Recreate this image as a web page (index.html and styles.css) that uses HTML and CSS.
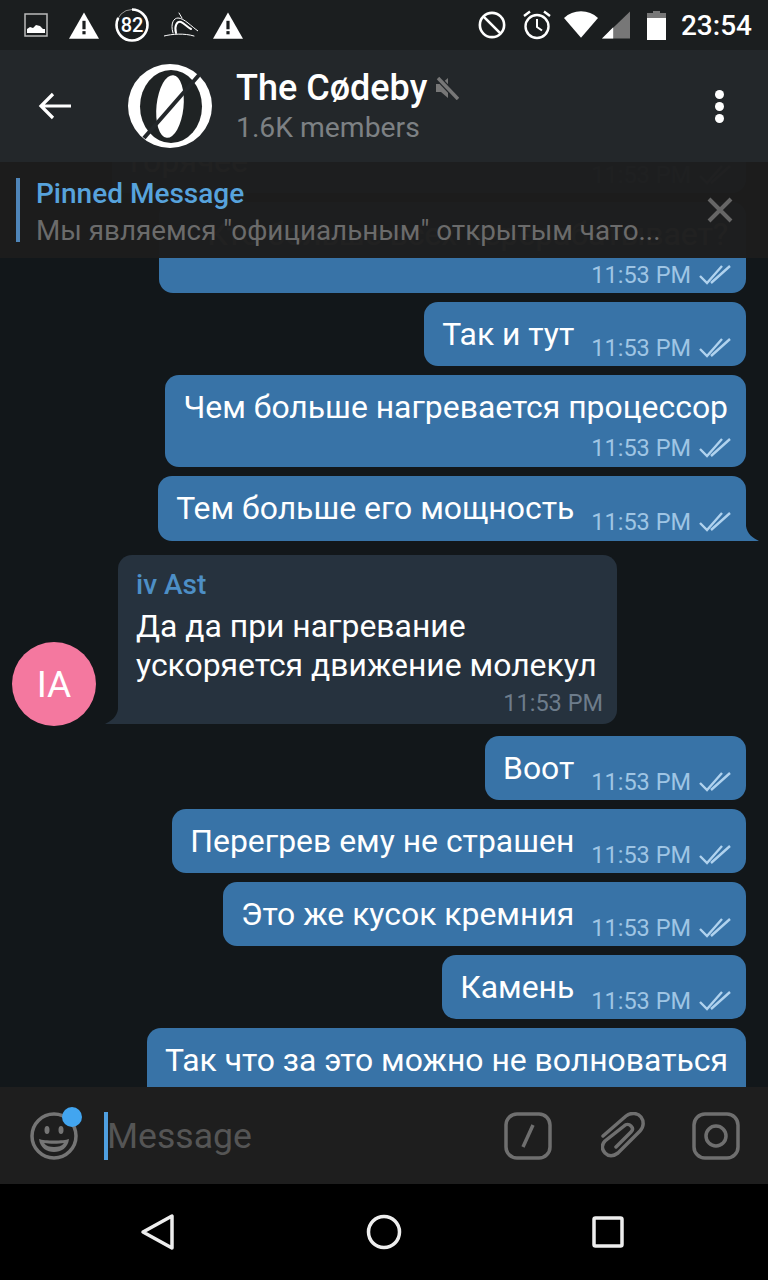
FILE: index.html
```html
<!DOCTYPE html>
<html lang="ru">
<head>
  <meta charset="UTF-8" />
  <title>The Cødeby</title>
  <link rel="stylesheet" href="styles.css">
</head>
<body>
  <div class="screen">

    <div class="statusbar">
      <div class="status-left">
        <svg class="ic-image" width="24" height="24" viewBox="0 0 24 24"><rect x="1" y="1" width="22" height="22" fill="none" stroke="#bbb" stroke-width="1.5"/><path d="M3 20v-4l3-2 3 1 3-3 4 1 3 3 2 0v4z" fill="#fff"/></svg>
        <svg class="ic-warn" width="30" height="27" viewBox="0 0 32 28"><path d="M16 0 32 28H0z" fill="#fff"/><rect x="14.3" y="9" width="3.4" height="9" fill="#1b1e1f"/><rect x="14.3" y="20" width="3.4" height="3.4" fill="#1b1e1f"/></svg>
        <div class="score">
          <svg width="34" height="34" viewBox="0 0 34 34"><circle cx="17" cy="17" r="15.500" fill="none" stroke="#999" stroke-width="1"/><circle cx="17" cy="17" r="15.500" fill="none" stroke="#fff" stroke-width="2.600" stroke-dasharray="80 98" transform="rotate(-90 17 17)"/></svg>
          <span>82</span>
        </div>
        <svg class="ic-dragon" width="34" height="28" viewBox="0 0 34 28"><g fill="none" stroke="#fff" stroke-linecap="round"><path d="M0 25c8-2 20-3 30 0" stroke-width="1"/><path d="M9 22C6 12 10 7 14 7c6 0 14 9 20 13" stroke-width="1"/><path d="M12 22c-2-7 1-12 5-11 3 1 6 5 10 7" stroke-width="2"/><path d="M15 2l3 5" stroke-width="1"/></g></svg>
        <svg class="ic-warn2" width="30" height="27" viewBox="0 0 32 28"><path d="M16 0 32 28H0z" fill="#fff"/><rect x="14.3" y="9" width="3.4" height="9" fill="#1b1e1f"/><rect x="14.3" y="20" width="3.4" height="3.4" fill="#1b1e1f"/></svg>
      </div>
      <div class="status-right">
        <svg width="28" height="28" viewBox="0 0 30 30"><circle cx="15" cy="15" r="13" fill="none" stroke="#fff" stroke-width="2.800"/><path d="M6 6l18 18" stroke="#fff" stroke-width="2.800"/></svg>
        <svg class="alarm" width="30" height="30" viewBox="0 0 30 30"><g fill="none" stroke="#fff"><circle cx="15" cy="16.500" r="11.500" stroke-width="2.400"/><path d="M15 9v8l5 3.500" stroke-width="2"/><path d="M2 6l6-4.500M28 6l-6-4.500" stroke-width="2.400"/></g></svg>
        <svg class="wifi" width="34" height="28" viewBox="0 0 36 29"><path d="M18 28 0 7C5 2.500 11 0 18 0s13 2.500 18 7z" fill="#fff"/></svg>
        <svg class="signal" width="28" height="28" viewBox="0 0 30 29"><path d="M30 0v29H0z" fill="#777"/><path d="M0 29 12 17v12z" fill="#fff"/></svg>
        <svg class="battery" width="19" height="29" viewBox="0 0 19 29"><path d="M6 0h7v2h6v5H0V2h6z" fill="#777"/><path d="M0 7h19v22H0z" fill="#fff"/></svg>
        <span class="clock">23:54</span>
      </div>
    </div>

    <header class="topbar">
      <svg class="back" width="34" height="30" viewBox="0 0 34 30"><path d="M33 15H3M15 3 3 15l12 12" fill="none" stroke="#fff" stroke-width="3.200"/></svg>
      <svg class="logo" width="84" height="84" viewBox="0 0 84 84">
        <circle cx="42" cy="42" r="42" fill="#fff"/>
        <ellipse cx="43" cy="42.500" rx="31" ry="36.500" fill="#1f2324"/>
        <ellipse cx="42" cy="42.500" rx="13.500" ry="31.500" fill="#fff" transform="rotate(6 42 42.500)"/>
        <path d="M16 74 71 11" stroke="#23272a" stroke-width="4"/>
      </svg>
      <div class="chat-title">
        <div class="title-line">
          <span class="name">The Cødeby</span>
          <svg width="24" height="24" viewBox="0 0 24 24"><path d="M1 8h5l7-6v20l-7-6H1z" fill="#777"/><path d="M3 2l20 21" stroke="#23272a" stroke-width="6"/><path d="M3 2l20 21" stroke="#777" stroke-width="3.500"/></svg>
        </div>
        <div class="members">1.6K members</div>
      </div>
      <div class="dots"><i></i><i></i><i></i></div>
    </header>

    <div class="chat">
      <div class="pinned">
        <div class="pin-line"></div>
        <div class="pin-body">
          <div class="pin-title">Pinned Message</div>
          <div class="pin-text">Мы являемся "официальным" открытым чато...</div>
        </div>
        <svg class="pin-close" width="26" height="26" viewBox="0 0 26 26"><path d="M2 2l22 22M24 2 2 24" stroke="#666" stroke-width="4"/></svg>
      </div>

      <div class="msg out behind-top">
        <span class="text">горячее</span>
        <span class="meta"><span class="time">11:53 PM</span><svg class="ticks" width="32" height="20" viewBox="0 0 32 20"><path d="M1 11l7 7L23 1M12 18 31 1" fill="none" stroke="#b0d2ee" stroke-width="2.400"/></svg></span>
      </div>

      <div class="msg out stacked behind-next">
        <div class="text">Кто больше всех перерабатывает?</div>
        <span class="meta"><span class="time">11:53 PM</span><svg class="ticks" width="32" height="20" viewBox="0 0 32 20"><path d="M1 11l7 7L23 1M12 18 31 1" fill="none" stroke="#b0d2ee" stroke-width="2.400"/></svg></span>
      </div>

      <div class="msg out">
        <span class="text">Так и тут</span>
        <span class="meta"><span class="time">11:53 PM</span><svg class="ticks" width="32" height="20" viewBox="0 0 32 20"><path d="M1 11l7 7L23 1M12 18 31 1" fill="none" stroke="#b0d2ee" stroke-width="2.400"/></svg></span>
      </div>

      <div class="msg out stacked">
        <span class="text">Чем больше нагревается процессор</span>
        <span class="meta"><span class="time">11:53 PM</span><svg class="ticks" width="32" height="20" viewBox="0 0 32 20"><path d="M1 11l7 7L23 1M12 18 31 1" fill="none" stroke="#b0d2ee" stroke-width="2.400"/></svg></span>
      </div>

      <div class="msg out tail">
        <span class="text">Тем больше его мощность</span>
        <span class="meta"><span class="time">11:53 PM</span><svg class="ticks" width="32" height="20" viewBox="0 0 32 20"><path d="M1 11l7 7L23 1M12 18 31 1" fill="none" stroke="#b0d2ee" stroke-width="2.400"/></svg></span>
      </div>

      <div class="in-row">
        <div class="avatar">IA</div>
        <div class="msg in">
          <div class="sender">iv Ast</div>
          <div class="text">Да да при нагревание<br>ускоряется движение молекул</div>
          <div class="in-time">11:53 PM</div>
        </div>
      </div>

      <div class="msg out">
        <span class="text">Воот</span>
        <span class="meta"><span class="time">11:53 PM</span><svg class="ticks" width="32" height="20" viewBox="0 0 32 20"><path d="M1 11l7 7L23 1M12 18 31 1" fill="none" stroke="#b0d2ee" stroke-width="2.400"/></svg></span>
      </div>

      <div class="msg out">
        <span class="text">Перегрев ему не страшен</span>
        <span class="meta"><span class="time">11:53 PM</span><svg class="ticks" width="32" height="20" viewBox="0 0 32 20"><path d="M1 11l7 7L23 1M12 18 31 1" fill="none" stroke="#b0d2ee" stroke-width="2.400"/></svg></span>
      </div>

      <div class="msg out">
        <span class="text">Это же кусок кремния</span>
        <span class="meta"><span class="time">11:53 PM</span><svg class="ticks" width="32" height="20" viewBox="0 0 32 20"><path d="M1 11l7 7L23 1M12 18 31 1" fill="none" stroke="#b0d2ee" stroke-width="2.400"/></svg></span>
      </div>

      <div class="msg out">
        <span class="text">Камень</span>
        <span class="meta"><span class="time">11:53 PM</span><svg class="ticks" width="32" height="20" viewBox="0 0 32 20"><path d="M1 11l7 7L23 1M12 18 31 1" fill="none" stroke="#b0d2ee" stroke-width="2.400"/></svg></span>
      </div>

      <div class="msg out stacked">
        <span class="text">Так что за это можно не волноваться</span>
      </div>
    </div>

    <div class="composer">
      <div class="emoji">
        <svg width="48" height="48" viewBox="0 0 48 48"><circle cx="24" cy="24" r="22" fill="none" stroke="#757575" stroke-width="3.500"/><ellipse cx="17" cy="18" rx="2.500" ry="4" fill="#757575"/><ellipse cx="31" cy="18" rx="2.500" ry="4" fill="#757575"/><path d="M9 27c5 2 25 2 30 0-1 9-8 13-15 13S10 36 9 27z" fill="#757575"/><path d="M14 31c5 1 15 1 20 0-2 3-6 4-10 4s-8-1-10-4z" fill="#1e1e1e"/></svg>
        <span class="emoji-dot"></span>
      </div>
      <div class="input">
        <span class="caret"></span>
        <span class="placeholder">Message</span>
      </div>
      <svg class="tool-bot" width="48" height="48" viewBox="0 0 48 48"><rect x="2" y="2" width="44" height="44" rx="11" fill="none" stroke="#6f6f6f" stroke-width="3.500"/><path d="M29 13 19 35" stroke="#6f6f6f" stroke-width="3.500"/></svg>
      <svg class="tool-clip" width="44" height="48" viewBox="0 0 44 48"><path d="M2 24 25 4c5-4 12-3 15 1s3 10-1 14L17 41c-4 3-9 4-13 0s-3-9 0-12L23 14c2-2 5-2 7 0s2 4 0 6L15 35" fill="none" stroke="#6f6f6f" stroke-width="3.500" stroke-linecap="round"/></svg>
      <svg class="tool-camera" width="48" height="48" viewBox="0 0 48 48"><rect x="2" y="2" width="44" height="44" rx="11" fill="none" stroke="#6f6f6f" stroke-width="3.500"/><circle cx="24" cy="24" r="10" fill="none" stroke="#6f6f6f" stroke-width="3.500"/></svg>
    </div>

    <nav class="navbar">
      <svg width="36" height="38" viewBox="0 0 36 38"><path d="M32 3v32L3 19z" fill="none" stroke="#eee" stroke-width="3.500" stroke-linejoin="round"/></svg>
      <svg width="36" height="36" viewBox="0 0 36 36"><circle cx="18" cy="18" r="15.500" fill="none" stroke="#eee" stroke-width="3.500"/></svg>
      <svg width="32" height="32" viewBox="0 0 32 32"><rect x="2" y="2" width="28" height="28" rx="1.500" fill="none" stroke="#eee" stroke-width="3.500"/></svg>
    </nav>

  </div>
</body>
</html>
```

FILE: styles.css
```css
* {
  box-sizing: border-box;
}
html, body {
  margin: 0;
  background: #000;
}
body {
  font-family: Roboto, 'Noto Sans', sans-serif;
  color: #fff;
}
svg {
  display: block;
  flex: none;
}
.screen {
  width: 768px;
  height: 1280px;
  display: flex;
  flex-direction: column;
  overflow: hidden;
}

/* status bar */
.statusbar {
  height: 50px;
  flex: none;
  background: #1b1e1f;
  display: flex;
  justify-content: space-between;
  align-items: center;
  padding: 0 16px 0 24px;
}
.status-left, .status-right {
  display: flex;
  align-items: center;
}
.ic-warn {
  margin-left: 21px;
}
.score {
  position: relative;
  width: 34px;
  height: 34px;
  margin-left: 16px;
}
.score span {
  position: absolute;
  top: 0;
  left: 0;
  width: 34px;
  text-align: center;
  font-size: 20px;
  font-weight: 500;
  line-height: 34px;
}
.ic-dragon {
  margin-left: 15px;
}
.ic-warn2 {
  margin-left: 15px;
}
.alarm {
  margin-left: 16px;
}
.wifi {
  margin-left: 12px;
}
.signal {
  margin-left: 4px;
}
.battery {
  margin-left: 17px;
}
.clock {
  margin-left: 15px;
  font-size: 28px;
  font-weight: 500;
}

/* header */
.topbar {
  height: 112px;
  flex: none;
  background: #23272a;
  display: flex;
  align-items: center;
  padding-left: 38px;
  position: relative;
  z-index: 3;
}
.logo {
  margin-left: 56px;
}
.chat-title {
  margin-left: 24px;
  flex: 1;
  margin-top: 3px;
}
.title-line {
  display: flex;
  align-items: center;
  gap: 8px;
  margin-top: -1px;
}
.name {
  font-size: 36px;
  font-weight: 500;
  line-height: 42px;
}
.members {
  font-size: 28.3px;
  line-height: 38px;
  color: #7d8184;
}
.dots {
  display: flex;
  flex-direction: column;
  gap: 3px;
  margin-right: 44px;
}
.dots i {
  width: 9px;
  height: 9px;
  border-radius: 50%;
  background: #fff;
}

/* chat */
.chat {
  flex: 1;
  min-height: 0;
  background: #12171a;
  position: relative;
  overflow: hidden;
  display: flex;
  flex-direction: column;
  gap: 9px;
  padding-right: 22px;
}
.pinned {
  position: absolute;
  top: 0;
  left: 0;
  right: 0;
  height: 96px;
  background: rgba(29, 29, 29, 0.98);
  z-index: 2;
  display: flex;
  align-items: center;
  padding: 0 35px 0 16px;
}
.pin-line {
  width: 4px;
  height: 64px;
  background: #4f85b8;
}
.pin-body {
  flex: 1;
  margin-left: 16px;
  padding-top: 5px;
}
.pin-title {
  font-size: 28px;
  font-weight: 500;
  line-height: 36px;
  color: #57a3dc;
}
.pin-text {
  font-size: 27.8px;
  line-height: 37px;
  color: #6b6b6b;
  white-space: nowrap;
}
.msg {
  font-size: 31.9px;
  line-height: 39px;
  position: relative;
  flex: none;
}
.msg.out {
  align-self: flex-end;
  background: #3873a7;
  border-radius: 14px;
  height: 64px;
  padding: 13px 15px 0 18px;
  display: flex;
}
.msg.out .text {
  white-space: nowrap;
}
.meta {
  display: flex;
  align-items: center;
  margin-left: 17px;
  height: 30px;
  margin-top: 18px;
  color: #9fc5e4;
  font-size: 23.5px;
  line-height: 30px;
  gap: 8px;
}
.msg.out.stacked {
  display: block;
  height: 92px;
  padding-right: 18px;
}
.msg.out.stacked .meta {
  margin-top: 6px;
  margin-right: -3px;
  justify-content: flex-end;
}

/* the two messages scrolled under the pinned bar */
.msg.out.behind-top {
  width: 634px;
  margin-top: -33px;
}
.behind-top .text {
  flex: 1;
}
.msg.out.stacked.behind-next {
  width: 587px;
  height: 91px;
  text-align: right;
}

.msg.out.tail {
  height: 65px;
  border-bottom-right-radius: 0;
}
.msg.out.tail::after {
  content: "";
  position: absolute;
  right: -13px;
  bottom: 0;
  width: 13px;
  height: 15px;
  background: #3873a7;
  clip-path: path("M0 0C1 8 7 12 13 15H0Z");
}
.in-row {
  display: flex;
  align-items: flex-end;
  margin-top: 5px;
  margin-bottom: 3px;
  padding-left: 12px;
  flex: none;
}
.avatar {
  width: 84px;
  height: 84px;
  border-radius: 50%;
  background: #f4789f;
  font-size: 37px;
  display: flex;
  align-items: center;
  justify-content: center;
  margin-bottom: -2px;
  flex: none;
}
.msg.in {
  margin-left: 22px;
  width: 499px;
  height: 169px;
  background: #26323e;
  border-radius: 14px;
  border-bottom-left-radius: 0;
  padding: 11px 18px 0;
}
.msg.in::after {
  content: "";
  position: absolute;
  left: -13px;
  bottom: 0;
  width: 13px;
  height: 15px;
  background: #26323e;
  clip-path: path("M13 0C12 8 6 12 0 15H13Z");
}
.sender {
  font-size: 28px;
  font-weight: 500;
  line-height: 38px;
  margin-bottom: 3px;
  color: #4d8fc6;
}
.in-time {
  text-align: right;
  margin: 1px -4px 0 0;
  font-size: 23.5px;
  line-height: 34px;
  color: #6d7c8b;
}

/* message input */
.composer {
  height: 97px;
  flex: none;
  background: #1e1e1e;
  display: flex;
  align-items: center;
  padding-left: 30px;
  position: relative;
  z-index: 3;
}
.emoji {
  position: relative;
  width: 48px;
  height: 48px;
  margin-right: 26px;
}
.emoji-dot {
  position: absolute;
  top: -5px;
  right: -4px;
  width: 20px;
  height: 20px;
  border-radius: 50%;
  background: #42a5f0;
}
.input {
  flex: 1;
  display: flex;
  align-items: center;
}
.caret {
  width: 4px;
  height: 48px;
  background: #4f9fe0;
}
.placeholder {
  font-size: 35.6px;
  color: #555;
  margin-left: -1px;
}
.tool-bot {
  margin-right: 49px;
}
.tool-clip {
  margin-right: 47px;
}
.tool-camera {
  margin-right: 28px;
}

/* android nav */
.navbar {
  height: 96px;
  flex: none;
  background: #000;
  display: flex;
  align-items: center;
  padding: 0 144px 0 140px;
  justify-content: space-between;
}
```
